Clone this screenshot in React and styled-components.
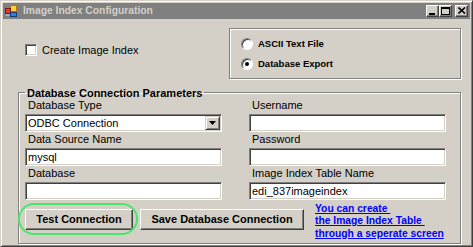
import React from "react";
import styled, { createGlobalStyle } from "styled-components";

const GlobalStyle = createGlobalStyle`
  html, body { margin: 0; padding: 0; background: #d4d0c8; }
  body { font-family: "Liberation Sans", Arial, sans-serif; color: #000; }
  * { box-sizing: border-box; }
`;

const Window = styled.div`
  width: 473px;
  height: 247px;
  background: #d4d0c8;
  border: 1px solid;
  border-color: #d4d0c8 #404040 #404040 #d4d0c8;
  box-shadow: inset 1px 1px #fff, inset -1px -1px #808080;
  padding: 2px;
  display: flex;
  flex-direction: column;
`;

const TitleBar = styled.div`
  height: 16px;
  background: #808080;
  display: flex;
  align-items: center;
  padding: 0 2px;
`;

const Title = styled.span`
  margin-left: 6px;
  font-size: 10.3px;
  font-weight: bold;
  color: #d4d0c8;
  flex: 1;
`;

const Controls = styled.div`
  display: flex;
  align-items: center;
`;

const CtrlButton = styled.div`
  width: 13px;
  height: 12px;
  margin-left: ${(p) => (p.$gap ? "3px" : "0")};
  background: #d4d0c8;
  border: 1px solid;
  border-color: #fff #404040 #404040 #fff;
  box-shadow: inset -1px -1px #808080;
  display: flex;
  align-items: center;
  justify-content: center;
`;

const Body = styled.div`
  flex: 1;
  padding: 9px 9px 0 15px;
  display: flex;
  flex-direction: column;
`;

const TopRow = styled.div`
  display: flex;
  justify-content: space-between;
  height: 51px;
`;

const CheckArea = styled.label`
  display: flex;
  align-items: center;
  gap: 5px;
  padding: 14px 0 0 7px;
  height: 30px;
  font-size: 11px;
`;

const CheckBox = styled.span`
  width: 12px;
  height: 12px;
  background: #fff;
  border: 1px solid;
  border-color: #808080 #fff #fff #808080;
  box-shadow: inset 1px 1px #404040, inset -1px -1px #d4d0c8;
`;

const RadioGroup = styled.div`
  width: 232px;
  height: 51px;
  border: 1px solid #808080;
  box-shadow: inset 1px 1px #fff, 1px 1px #fff;
  padding: 5px 0 0 11px;
`;

const RadioRow = styled.div`
  height: 20px;
  display: flex;
  align-items: center;
  gap: 5px;
  font-size: 9.5px;
  font-weight: bold;
`;

const Radio = styled.span`
  width: 12px;
  height: 12px;
  border-radius: 50%;
  background: #fff;
  border: 1px solid;
  border-color: #808080 #fff #fff #808080;
  box-shadow: inset 1px 1px #404040;
  display: flex;
  align-items: center;
  justify-content: center;

  &::after {
    content: "";
    width: 4px;
    height: 4px;
    border-radius: 50%;
    background: ${(p) => (p.$checked ? "#000" : "transparent")};
  }
`;

const Group = styled.fieldset`
  margin: 8px 0 0 0;
  padding: 0 6px 3px 6px;
  border: 1px solid #808080;
  box-shadow: inset 1px 1px #fff, 1px 1px #fff;
  min-width: 0;
`;

const Legend = styled.legend`
  padding: 0 2px;
  font-size: 11px;
  line-height: 12px;
  font-weight: bold;
`;

const FieldGrid = styled.div`
  display: grid;
  grid-template-columns: 197px 197px;
  column-gap: 27px;
  row-gap: 1px;
`;

const Field = styled.div`
  display: flex;
  flex-direction: column;
`;

const Label = styled.span`
  font-size: 11px;
  line-height: 13px;
  margin-bottom: 2px;
  padding-left: 3px;
`;

const TextBox = styled.div`
  height: 18px;
  background: #fff;
  border: 1px solid;
  border-color: #808080 #fff #fff #808080;
  box-shadow: inset 1px 1px #404040, inset -1px -1px #d4d0c8;
  display: flex;
  align-items: center;
  padding: 0 1px 0 2px;
  font-size: 11px;
`;

const SelectText = styled.span`
  flex: 1;
`;

const DropButton = styled.span`
  width: 15px;
  height: 14px;
  background: #d4d0c8;
  border: 1px solid;
  border-color: #d4d0c8 #404040 #404040 #d4d0c8;
  box-shadow: inset 1px 1px #fff, inset -1px -1px #808080;
  display: flex;
  align-items: center;
  justify-content: center;
`;

const ButtonRow = styled.div`
  display: flex;
  align-items: flex-start;
  margin-top: 2px;
`;

const ButtonWrap = styled.div`
  position: relative;
  margin-top: 7px;
  margin-right: ${(p) => p.$gap}px;
`;

const Button = styled.button`
  width: ${(p) => p.$w}px;
  height: 21px;
  padding: 0;
  background: #d4d0c8;
  border: 1px solid;
  border-color: #fff #404040 #404040 #fff;
  box-shadow: inset -1px -1px #808080;
  font-family: "Liberation Sans", Arial, sans-serif;
  font-size: 11px;
  font-weight: bold;
  color: #000;
`;

const Highlight = styled.span`
  position: absolute;
  top: -6px;
  left: -7px;
  right: -5px;
  bottom: -5px;
  border: 2px solid #4ee36d;
  border-radius: 16px;
  box-shadow: 0 0 1px #9ef0ad, inset 0 0 1px #9ef0ad;
  pointer-events: none;
`;

const Link = styled.a`
  font-size: 10.3px;
  line-height: 12.5px;
  font-weight: bold;
  color: #0000ff;
  text-decoration: underline;
  white-space: pre;
  margin-top: 1px;
`;

const AppIcon = () => (
  <svg width="12" height="12" viewBox="0 0 12 12">
    <rect x="5.5" y="0.5" width="6" height="6" fill="#f7d03a" stroke="#b07a10" />
    <rect x="0.5" y="3.5" width="5" height="5" fill="#e23b2a" stroke="#7a1a10" />
    <rect x="5.5" y="7.5" width="6" height="4" fill="#3a7be0" stroke="#1a3a80" />
    <rect x="0.5" y="9" width="4" height="2" fill="#9ab0c8" />
  </svg>
);

const MinGlyph = () => (
  <svg width="7" height="8" viewBox="0 0 7 8">
    <rect x="0" y="6" width="6" height="2" fill="#000" />
  </svg>
);

const MaxGlyph = () => (
  <svg width="9" height="8" viewBox="0 0 9 8">
    <rect x="0.5" y="0.5" width="8" height="7" fill="none" stroke="#000" />
    <rect x="0" y="1" width="9" height="1" fill="#000" />
  </svg>
);

const CloseGlyph = () => (
  <svg width="8" height="7" viewBox="0 0 8 7">
    <path d="M0.5 0.5 L7 6.5 M7 0.5 L0.5 6.5" stroke="#000" strokeWidth="1.6" />
  </svg>
);

const Arrow = () => (
  <svg width="7" height="4" viewBox="0 0 7 4">
    <path d="M0 0 H7 L3.5 4 Z" fill="#000" />
  </svg>
);

const fields = [
  { label: "Database Type", value: "ODBC Connection", select: true },
  { label: "Username", value: "" },
  { label: "Data Source Name", value: "mysql" },
  { label: "Password", value: "" },
  { label: "Database", value: "" },
  { label: "Image Index Table Name", value: "edi_837imageindex" },
];

const App = () => {
  return (
    <>
      <GlobalStyle />
      <Window>
        <TitleBar>
          <AppIcon />
          <Title>Image Index Configuration</Title>
          <Controls>
            <CtrlButton><MinGlyph /></CtrlButton>
            <CtrlButton><MaxGlyph /></CtrlButton>
            <CtrlButton $gap><CloseGlyph /></CtrlButton>
          </Controls>
        </TitleBar>
        <Body>
          <TopRow>
            <CheckArea>
              <CheckBox />
              Create Image Index
            </CheckArea>
            <RadioGroup>
              <RadioRow>
                <Radio />
                ASCII Text File
              </RadioRow>
              <RadioRow>
                <Radio $checked />
                Database Export
              </RadioRow>
            </RadioGroup>
          </TopRow>
          <Group>
            <Legend>Database Connection Parameters</Legend>
            <FieldGrid>
              {fields.map((f) => (
                <Field key={f.label}>
                  <Label>{f.label}</Label>
                  <TextBox>
                    <SelectText>{f.value}</SelectText>
                    {f.select && (
                      <DropButton>
                        <Arrow />
                      </DropButton>
                    )}
                  </TextBox>
                </Field>
              ))}
            </FieldGrid>
            <ButtonRow>
              <ButtonWrap $gap={7}>
                <Button $w={108}>Test Connection</Button>
                <Highlight />
              </ButtonWrap>
              <ButtonWrap $gap={11}>
                <Button $w={164}>Save Database Connection</Button>
              </ButtonWrap>
              <Link href="#">
                {"You can create \nthe Image Index Table \nthrough a seperate screen"}
              </Link>
            </ButtonRow>
          </Group>
        </Body>
      </Window>
    </>
  );
};

export default App;
